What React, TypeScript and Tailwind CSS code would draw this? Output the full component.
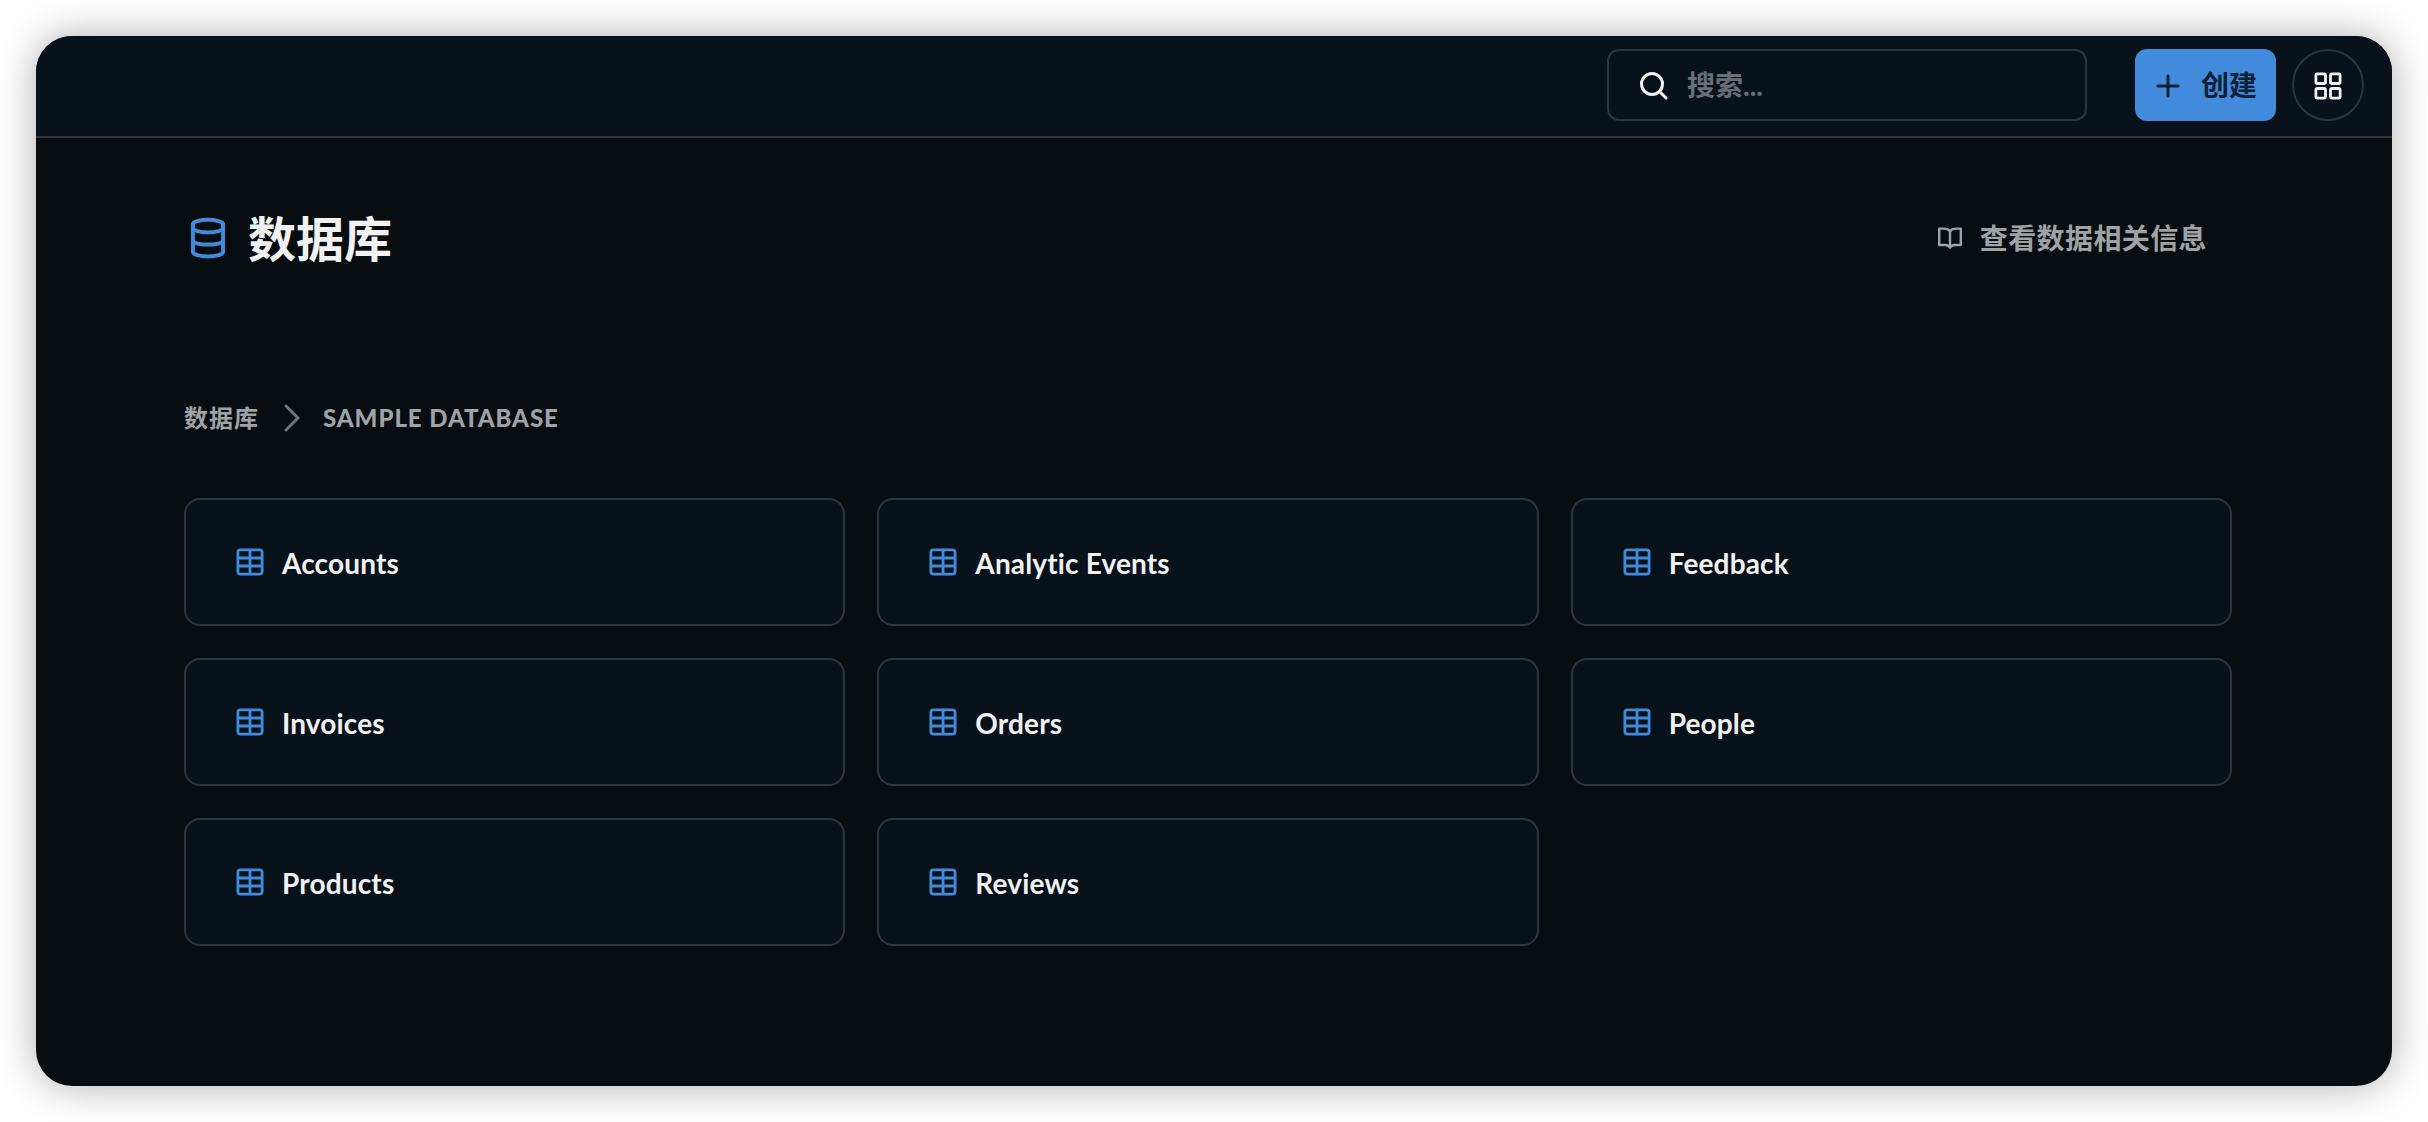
interface TableItem {
  id: number;
  name: string;
}

const tables: TableItem[] = [
  { id: 1, name: "Accounts" },
  { id: 2, name: "Analytic Events" },
  { id: 3, name: "Feedback" },
  { id: 4, name: "Invoices" },
  { id: 5, name: "Orders" },
  { id: 6, name: "People" },
  { id: 7, name: "Products" },
  { id: 8, name: "Reviews" },
];

interface IconProps {
  className?: string;
}

function SearchIcon({ className }: IconProps) {
  return (
    <svg className={className} viewBox="0 0 32 32" fill="none" stroke="currentColor" strokeWidth="3" strokeLinecap="round">
      <circle cx="14" cy="14" r="10.5" />
      <path d="M21.6 21.6L28 28" />
    </svg>
  );
}

function PlusIcon({ className }: IconProps) {
  return (
    <svg className={className} viewBox="0 0 24 24" fill="none" stroke="currentColor" strokeWidth="3" strokeLinecap="round">
      <path d="M12 2v20M2 12h20" />
    </svg>
  );
}

function GridIcon({ className }: IconProps) {
  return (
    <svg className={className} viewBox="0 0 28 28" fill="none" stroke="currentColor" strokeWidth="2.8">
      <rect x="1.9" y="1.9" width="9.6" height="9.6" rx="1.6" />
      <rect x="16.5" y="1.9" width="9.6" height="9.6" rx="1.6" />
      <rect x="1.9" y="16.5" width="9.6" height="9.6" rx="1.6" />
      <rect x="16.5" y="16.5" width="9.6" height="9.6" rx="1.6" />
    </svg>
  );
}

function DatabaseIcon({ className }: IconProps) {
  return (
    <svg className={className} viewBox="0 0 48 48" fill="none" stroke="currentColor" strokeWidth="4">
      <path d="M8.9 10.2C8.9 7.8 15.7 5.8 24 5.800s15.100 2 15.100 4.400v3.900c0 2.400-6.800 4.400-15.100 4.400S8.900 16.500 8.900 14.100z" />
      <path d="M8.900 12v26c0 2.400 6.800 4.400 15.100 4.400s15.100-2 15.100-4.400V12" />
      <path d="M8.900 27.600c2.700 1.900 8.300 3 15.100 3s12.400-1.100 15.100-3" />
    </svg>
  );
}

function BookIcon({ className }: IconProps) {
  return (
    <svg className={className} viewBox="0 0 24 24" fill="none" stroke="currentColor" strokeWidth="2.4" strokeLinejoin="round">
      <path d="M12 5.2C10.6 3.2 8.2 2.6 5.5 2.600H1.200V19h6.300c2 0 3.500 1 4.500 2.600 1-1.600 2.500-2.600 4.500-2.600h6.300V2.600h-4.300C15.800 2.600 13.400 3.200 12 5.200z" />
      <path d="M12 5.200v16" />
    </svg>
  );
}

function TableIcon({ className }: IconProps) {
  return (
    <svg className={className} viewBox="0 0 32 32" fill="none" stroke="currentColor" strokeWidth="2.8">
      <rect x="3.9" y="3.9" width="24.2" height="24.2" rx="2.6" />
      <path d="M3.9 12h24.2M3.9 20h24.2M16 3.9v24.2" />
    </svg>
  );
}

function ChevronIcon({ className }: IconProps) {
  return (
    <svg className={className} viewBox="0 0 16 28" fill="none" stroke="currentColor" strokeWidth="3" strokeLinecap="round" strokeLinejoin="round">
      <path d="M2 2l12 12L2 26" />
    </svg>
  );
}

function Header() {
  return (
    <header className="flex h-[102px] items-start justify-end border-b-2 border-[#2d353f] bg-[#09121a] pt-[13px] pr-7">
      <div className="flex h-18 w-[480px] items-center rounded-xl border-2 border-[#2d353d] pl-[29px]">
        <SearchIcon className="mt-0.5 size-8 text-[#f2f2f2]" />
        <span className="ml-[17px] text-[28px] leading-none font-bold text-[#696e78]">搜索...</span>
      </div>
      <button className="ml-12 flex h-18 w-[141px] items-center rounded-xl bg-[#428bdc] pl-[21px] text-[#0d2236]">
        <PlusIcon className="mt-0.5 size-6" />
        <span className="ml-[21px] text-[28px] leading-none font-bold">创建</span>
      </button>
      <button className="ml-4 flex size-18 items-center justify-center rounded-full border-2 border-[#2d353d] pt-0.5 text-[#f2f2f2]">
        <GridIcon className="size-7" />
      </button>
    </header>
  );
}

function TableCard({ name }: { name: string }) {
  return (
    <a className="flex h-32 items-center rounded-2xl border-2 border-[#2d363e] bg-[#09121a] px-12">
      <TableIcon className="size-8 text-[#428bdc]" />
      <span className="ml-4 pt-0.5 text-[28px] leading-8 font-bold tracking-[0.15px] text-[#f1f1f1]">{name}</span>
    </a>
  );
}

export default function App() {
  return (
    <div className="h-[1122px] w-[2428px] overflow-hidden bg-white p-9 font-[Lato,'Noto_Sans_CJK_SC',sans-serif]">
      <div className="h-[1050px] overflow-hidden rounded-[36px] bg-[#070d10] shadow-[0_0_40px_rgba(0,0,0,0.32)]">
        <Header />
        <main className="px-37 pt-[72px]">
          <div className="flex h-14 w-[2048px] items-center justify-between">
            <h1 className="flex items-center text-[#f0f2f1]">
              <DatabaseIcon className="size-12 text-[#428bdc]" />
              <span className="ml-4 pt-0.5 text-[48px] leading-none font-bold">数据库</span>
            </h1>
            <a className="flex items-center pr-[25px] text-[#9fa3a5]">
              <BookIcon className="size-6" />
              <span className="ml-[18px] text-[28px] leading-none font-bold tracking-[0.4px]">查看数据相关信息</span>
            </a>
          </div>

          {/* Breadcrumbs */}
          <nav className="mt-[136px] flex h-8 items-center text-2xl leading-none tracking-[1px] text-[#9fa3a5]">
            <span className="font-bold">数据库</span>
            <ChevronIcon className="mr-[23px] ml-[25px] h-7 w-4 text-[#6f7477]" />
            <span className="font-black tracking-[0.95px]">SAMPLE DATABASE</span>
          </nav>

          <div className="mt-16 grid w-[2048px] grid-cols-3 gap-8">
            {tables.map(({ id, name }) => (
              <TableCard key={id} name={name} />
            ))}
          </div>
        </main>
      </div>
    </div>
  );
}
